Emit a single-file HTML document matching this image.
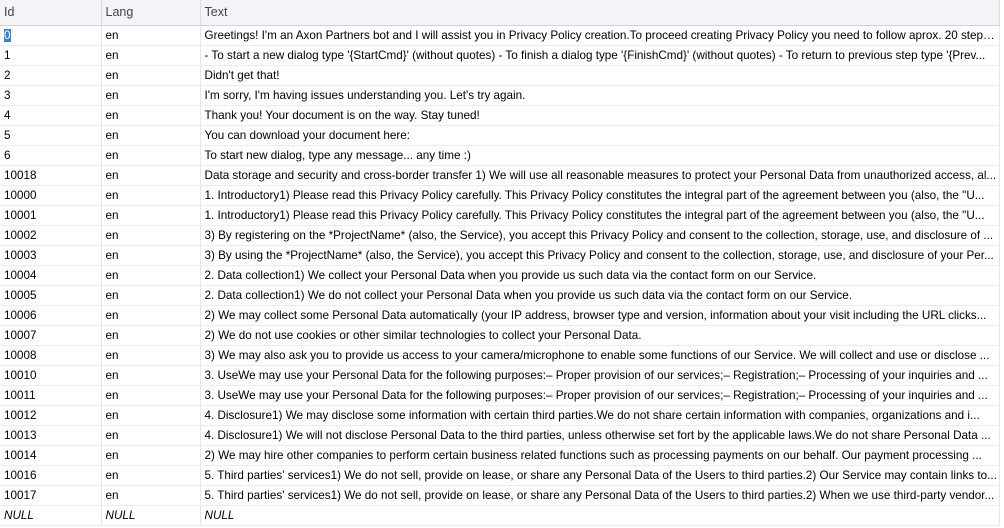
<!DOCTYPE html>
<html><head><style>
body{margin:0;width:1004px;height:528px;overflow:hidden;background:#fff;font-family:"Liberation Sans",sans-serif;font-size:11.7px;color:#000}
table{border-collapse:collapse;table-layout:fixed;width:999px}
td,th{height:19px;line-height:19px;padding:0 0 0 4px;white-space:nowrap;overflow:hidden;text-overflow:ellipsis;border-right:1px solid #e6e6e6;border-bottom:1px solid #ececec;text-align:left;font-weight:normal}
td{padding-top:1px;height:18px;line-height:18px}
th{height:25px;line-height:25px;background:#f2f4f8;color:#444;border-right:1px solid #d8dde6;border-bottom:1px solid #cdd3dc;font-size:12.5px}
td.i{font-style:italic}
.sel{background:#3a80d8;color:#fff}
</style></head><body>
<table>
<colgroup><col style="width:101px"><col style="width:99px"><col style="width:799px"></colgroup>
<tr><th>Id</th><th>Lang</th><th>Text</th></tr>
<tr><td><span class="sel">0</span></td><td>en</td><td>Greetings! I'm an Axon Partners bot and I will assist you in Privacy Policy creation.To proceed creating Privacy Policy you need to follow aprox. 20 steps...</td></tr>
<tr><td>1</td><td>en</td><td>- To start a new dialog type '{StartCmd}' (without quotes) - To finish a dialog type '{FinishCmd}' (without quotes) - To return to previous step type '{Prev...</td></tr>
<tr><td>2</td><td>en</td><td>Didn't get that!</td></tr>
<tr><td>3</td><td>en</td><td>I'm sorry, I'm having issues understanding you. Let's try again.</td></tr>
<tr><td>4</td><td>en</td><td>Thank you! Your document is on the way. Stay tuned!</td></tr>
<tr><td>5</td><td>en</td><td>You can download your document here:</td></tr>
<tr><td>6</td><td>en</td><td>To start new dialog, type any message... any time :)</td></tr>
<tr><td>10018</td><td>en</td><td>Data storage and security and cross-border transfer 1) We will use all reasonable measures to protect your Personal Data from unauthorized access, al...</td></tr>
<tr><td>10000</td><td>en</td><td>1. Introductory1) Please read this Privacy Policy carefully. This Privacy Policy constitutes the integral part of the agreement between you (also, the "U...</td></tr>
<tr><td>10001</td><td>en</td><td>1. Introductory1) Please read this Privacy Policy carefully. This Privacy Policy constitutes the integral part of the agreement between you (also, the "U...</td></tr>
<tr><td>10002</td><td>en</td><td>3) By registering on the *ProjectName* (also, the Service), you accept this Privacy Policy and consent to the collection, storage, use, and disclosure of ...</td></tr>
<tr><td>10003</td><td>en</td><td>3) By using the *ProjectName* (also, the Service), you accept this Privacy Policy and consent to the collection, storage, use, and disclosure of your Per...</td></tr>
<tr><td>10004</td><td>en</td><td>2. Data collection1) We collect your Personal Data when you provide us such data via the contact form on our Service.</td></tr>
<tr><td>10005</td><td>en</td><td>2. Data collection1) We do not collect your Personal Data when you provide us such data via the contact form on our Service.</td></tr>
<tr><td>10006</td><td>en</td><td>2) We may collect some Personal Data automatically (your IP address, browser type and version, information about your visit including the URL clicks...</td></tr>
<tr><td>10007</td><td>en</td><td>2) We do not use cookies or other similar technologies to collect your Personal Data.</td></tr>
<tr><td>10008</td><td>en</td><td>3) We may also ask you to provide us access to your camera/microphone to enable some functions of our Service. We will collect and use or disclose ...</td></tr>
<tr><td>10010</td><td>en</td><td>3. UseWe may use your Personal Data for the following purposes:– Proper provision of our services;– Registration;– Processing of your inquiries and ...</td></tr>
<tr><td>10011</td><td>en</td><td>3. UseWe may use your Personal Data for the following purposes:– Proper provision of our services;– Registration;– Processing of your inquiries and ...</td></tr>
<tr><td>10012</td><td>en</td><td>4. Disclosure1) We may disclose some information with certain third parties.We do not share certain information with companies, organizations and i...</td></tr>
<tr><td>10013</td><td>en</td><td>4. Disclosure1) We will not disclose Personal Data to the third parties, unless otherwise set fort by the applicable laws.We do not share Personal Data ...</td></tr>
<tr><td>10014</td><td>en</td><td>2) We may hire other companies to perform certain business related functions such as processing payments on our behalf. Our payment processing ...</td></tr>
<tr><td>10016</td><td>en</td><td>5. Third parties' services1) We do not sell, provide on lease, or share any Personal Data of the Users to third parties.2) Our Service may contain links to...</td></tr>
<tr><td>10017</td><td>en</td><td>5. Third parties' services1) We do not sell, provide on lease, or share any Personal Data of the Users to third parties.2) When we use third-party vendor...</td></tr>
<tr><td class="i">NULL</td><td class="i">NULL</td><td class="i">NULL</td></tr>
</table>
</body></html>
